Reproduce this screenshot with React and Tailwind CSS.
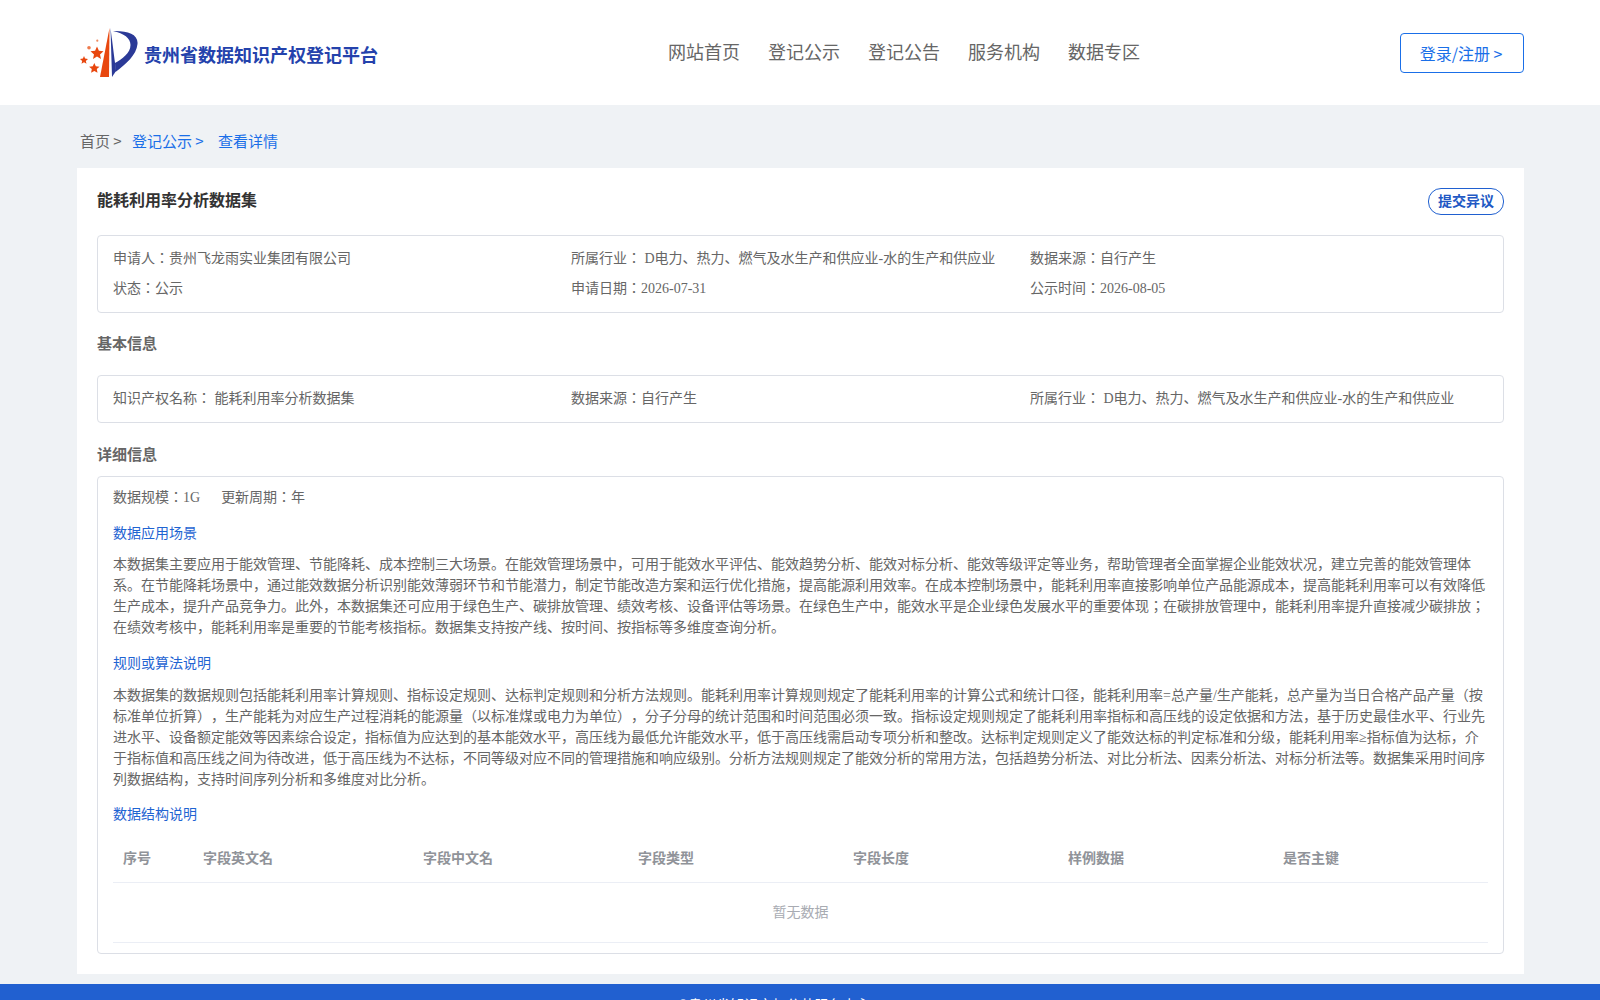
const cjk = "font-['Liberation_Serif','Noto_Sans_CJK_JP',serif]";

function Logo() {
  return (
    <svg width="58" height="50" viewBox="0 0 58 50" className="shrink-0">
      <path d="M29.5 0 L29 49 L20 49 Z" fill="#e8470f" />
      <path d="M30.5 0 L36 43 L32 49 Z" fill="#2b3a97" />
      <path d="M33 3 C47 2.5 58.5 6 57.5 16 C56.5 27 46 36 35.5 44 L35 35 C42 31 50.5 25 50.5 17 C50.5 10 44 5.5 33 3 Z" fill="#2b3a97" />
      <polygon points="17,18.5 18.9,22.8 23.5,23.3 20,26.4 21,31 17,28.6 13,31 14,26.4 10.5,23.3 15.1,22.8" fill="#e8470f" />
      <polygon points="4,28 5.1,30.6 8,30.9 5.8,32.9 6.5,35.8 4,34.2 1.5,35.8 2.2,32.9 0,30.9 2.9,30.6" fill="#e8470f" />
      <polygon points="14.3,35 15.8,38.3 19.5,38.7 16.8,41.1 17.5,44.8 14.3,43 11.1,44.8 11.8,41.1 9.1,38.7 12.8,38.3" fill="#e8470f" />
      <circle cx="9" cy="19.7" r="1.8" fill="#ee7a4c" />
      <circle cx="17.3" cy="12.7" r="1.1" fill="#ee8a60" />
    </svg>
  );
}

function Card({ className, children }) {
  return <div className={`border border-[#dcdfe6] rounded-[4px] px-[15px] ${className}`}>{children}</div>;
}

const columns = [
  { label: "序号", width: "w-[80px]" },
  { label: "字段英文名", width: "w-[220px]" },
  { label: "字段中文名", width: "w-[215px]" },
  { label: "字段类型", width: "w-[215px]" },
  { label: "字段长度", width: "w-[215px]" },
  { label: "样例数据", width: "w-[215px]" },
  { label: "是否主键", width: "flex-1" },
];

export default function App() {
  return (
    <div className={`w-full h-[1000px] overflow-hidden bg-[#eff2f5] flex flex-col [text-spacing-trim:space-all] ${cjk}`}>
      {/* HEADER */}
      <header className="h-[105px] shrink-0 bg-white flex items-start pl-[80px] pr-[76px] font-['Noto_Sans_CJK_JP',sans-serif]">
        <div className="w-[530px] flex items-center pt-[28px]">
          <Logo />
          <span className="text-[18px] font-bold text-[#2442ac] ml-[6px] mt-[2px]">贵州省数据知识产权登记平台</span>
        </div>
        <nav className="flex gap-[28px] pt-[38px] text-[18px] leading-[26px] text-[#666] ml-[58px]">
          <span>网站首页</span>
          <span>登记公示</span>
          <span>登记公告</span>
          <span>服务机构</span>
          <span>数据专区</span>
        </nav>
        <button className="ml-auto mt-[33px] w-[124px] h-[40px] border border-[#1a6fe8] rounded-[4px] text-[16px] leading-[36px] text-[#1a6fe8] pr-[2px]">登录/注册 &gt;</button>
      </header>

      <main className="flex-1 pl-[77px] pr-[76px]">
        {/* BREADCRUMB */}
        <div className="h-[63px] pt-[26px] text-[15px] leading-[20px] pl-[3px] flex font-['Noto_Sans_CJK_JP',sans-serif]">
          <span className="text-[#666] w-[52px]">首页 &gt;</span>
          <span className="text-[#1a6fe8] w-[86px]">登记公示 &gt;</span>
          <span className="text-[#1a6fe8]">查看详情</span>
        </div>

        {/* CONTENT */}
        <div className="bg-white h-[806px] px-[20px] pt-[20px]">
          <div className="flex items-start justify-between h-[47px]">
            <h1 className="text-[16px] leading-[24px] font-bold text-[#333] mt-[1px]">能耗利用率分析数据集</h1>
            <button className="w-[76px] h-[27px] border border-[#2060d0] rounded-[13px] text-[14px] font-bold text-[#2158c4]">提交异议</button>
          </div>

          <Card className="h-[78px] pt-[8px] text-[14px] leading-[30px] text-[#666]">
            <div className="grid grid-cols-[458px_459px_1fr]">
              <span>申请人：贵州飞龙雨实业集团有限公司</span>
              <span>所属行业： D电力、热力、燃气及水生产和供应业-水的生产和供应业</span>
              <span>数据来源：自行产生</span>
              <span>状态：公示</span>
              <span>申请日期：2026-07-31</span>
              <span>公示时间：2026-08-05</span>
            </div>
          </Card>

          <h2 className="text-[15px] leading-[22px] font-bold text-[#666] mt-[20px] mb-[20px]">基本信息</h2>

          <Card className="h-[48px] text-[14px] leading-[46px] text-[#666]">
            <div className="grid grid-cols-[458px_459px_1fr]">
              <span>知识产权名称： 能耗利用率分析数据集</span>
              <span>数据来源：自行产生</span>
              <span>所属行业： D电力、热力、燃气及水生产和供应业-水的生产和供应业</span>
            </div>
          </Card>

          <h2 className="text-[15px] leading-[22px] font-bold text-[#666] mt-[21px] mb-[10px]">详细信息</h2>

          <Card className="h-[478px] pt-[9px] text-[14px] text-[#666]">
            <div className="leading-[24px] flex gap-[21px]">
              <span>数据规模：1G</span>
              <span>更新周期：年</span>
            </div>

            <h3 className="text-[#1f64d2] leading-[24px] mt-[12px]">数据应用场景</h3>
            <p className="leading-[21px] mt-[8px]">
              本数据集主要应用于能效管理、节能降耗、成本控制三大场景。在能效管理场景中，可用于能效水平评估、能效趋势分析、能效对标分析、能效等级评定等业务，帮助管理者全面掌握企业能效状况，建立完善的能效管理体系。在节能降耗场景中，通过能效数据分析识别能效薄弱环节和节能潜力，制定节能改造方案和运行优化措施，提高能源利用效率。在成本控制场景中，能耗利用率直接影响单位产品能源成本，提高能耗利用率可以有效降低生产成本，提升产品竞争力。此外，本数据集还可应用于绿色生产、碳排放管理、绩效考核、设备评估等场景。在绿色生产中，能效水平是企业绿色发展水平的重要体现；在碳排放管理中，能耗利用率提升直接减少碳排放；在绩效考核中，能耗利用率是重要的节能考核指标。数据集支持按产线、按时间、按指标等多维度查询分析。
            </p>

            <h3 className="text-[#1f64d2] leading-[24px] mt-[14px]">规则或算法说明</h3>
            <p className="leading-[21px] mt-[9px]">
              本数据集的数据规则包括能耗利用率计算规则、指标设定规则、达标判定规则和分析方法规则。能耗利用率计算规则规定了能耗利用率的计算公式和统计口径，能耗利用率=总产量/生产能耗，总产量为当日合格产品产量（按标准单位折算），生产能耗为对应生产过程消耗的能源量（以标准煤或电力为单位），分子分母的统计范围和时间范围必须一致。指标设定规则规定了能耗利用率指标和高压线的设定依据和方法，基于历史最佳水平、行业先进水平、设备额定能效等因素综合设定，指标值为应达到的基本能效水平，高压线为最低允许能效水平，低于高压线需启动专项分析和整改。达标判定规则定义了能效达标的判定标准和分级，能耗利用率≥指标值为达标，介于指标值和高压线之间为待改进，低于高压线为不达标，不同等级对应不同的管理措施和响应级别。分析方法规则规定了能效分析的常用方法，包括趋势分析法、对比分析法、因素分析法、对标分析法等。数据集采用时间序列数据结构，支持时间序列分析和多维度对比分析。
            </p>

            <h3 className="text-[#1f64d2] leading-[24px] mt-[13px]">数据结构说明</h3>

            {/* TABLE */}
            <div className="mt-[7px] h-[49px] flex items-center border-b border-[#ebeef5] font-bold text-[#909399]">
              {columns.map((col) => (
                <div key={col.label} className={`${col.width} pl-[10px]`}>{col.label}</div>
              ))}
            </div>
            <div className="h-[60px] flex items-center justify-center border-b border-[#ebeef5] text-[#a8abb2]">暂无数据</div>
          </Card>
        </div>
      </main>

      {/* FOOTER */}
      <footer className="h-[16px] shrink-0 bg-[#2160d0] overflow-hidden text-center text-white text-[14px] leading-[16px] pt-[14px] pr-[52px]">
        ©贵州省知识产权公共服务中心
      </footer>
    </div>
  );
}
